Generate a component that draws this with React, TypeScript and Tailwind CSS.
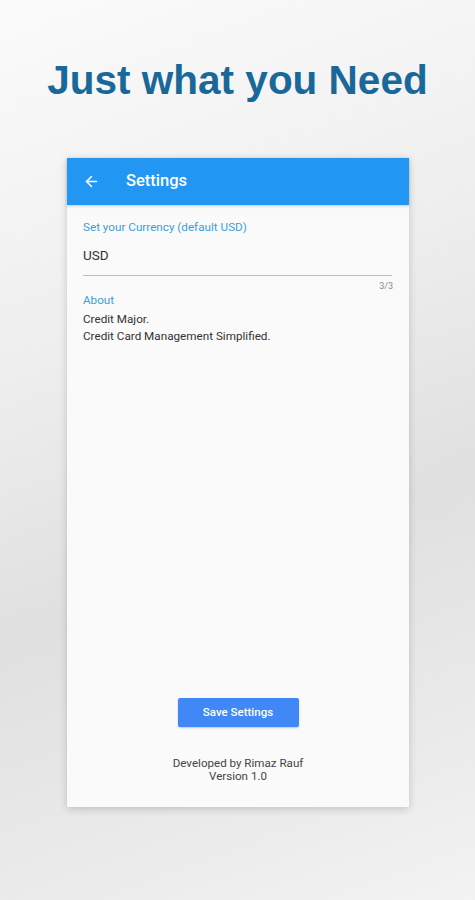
import { ArrowLeft } from "lucide-react";

const App = () => {
  return (
    <div
      className="w-[475px] h-[900px] overflow-hidden flex flex-col items-center bg-[linear-gradient(160deg,#fbfbfb_0%,#eeeeee_35%,#e0e0e0_60%,#ebebeb_85%,#f3f3f3_100%)]"
      style={{ fontFamily: "Roboto, 'Liberation Sans', sans-serif" }}
    >
      <h1
        className="mt-[56px] h-[48px] text-[40.5px] leading-[48px] font-bold text-[#19689a]"
        style={{ fontFamily: "'Liberation Sans', Arial, sans-serif" }}
      >
        Just what you Need
      </h1>

      <div className="mt-[54px] w-[342px] h-[649px] ml-[1px] bg-[#fafafa] flex flex-col shadow-[0_2px_8px_rgba(0,0,0,0.18)]">
        <div className="h-[47px] bg-[#2196f3] flex items-center pl-[16px] shadow-[0_1px_3px_rgba(0,0,0,0.2)]">
          <ArrowLeft className="w-[17px] h-[17px] text-white" strokeWidth={2.2} />
          <span className="ml-[26px] text-white text-[16.5px] font-medium">Settings</span>
        </div>

        <div className="flex-1 flex flex-col px-[16px] pt-[15px]">
          <div className="text-[11.7px] leading-[14px] text-[#3a9fd8]">Set your Currency (default USD)</div>
          <div className="mt-[13px] text-[13.5px] leading-[16px] text-[#333] pb-[12px] border-b border-[#bdbdbd] mr-[1px]">
            USD
          </div>
          <div className="text-right text-[9px] leading-[12px] text-[#888] mt-[4px]">3/3</div>
          <div className="text-[11.7px] leading-[14px] text-[#3a9fd8] mt-[1px]">About</div>
          <div className="mt-[4px] text-[11.7px] leading-[17px] text-[#333]">
            <div>Credit Major.</div>
            <div>Credit Card Management Simplified.</div>
          </div>

          <div className="flex-1" />

          <div className="flex justify-center">
            <button className="w-[121px] h-[29px] bg-[#3f88f5] text-white text-[11.5px] font-medium rounded-[2px] shadow-[0_1px_2px_rgba(0,0,0,0.2)]">
              Save Settings
            </button>
          </div>
          <div className="mt-[30px] mb-[24px] text-center text-[11.6px] leading-[13px] text-[#444]">
            <div>Developed by Rimaz Rauf</div>
            <div>Version 1.0</div>
          </div>
        </div>
      </div>
    </div>
  );
};

export default App;
